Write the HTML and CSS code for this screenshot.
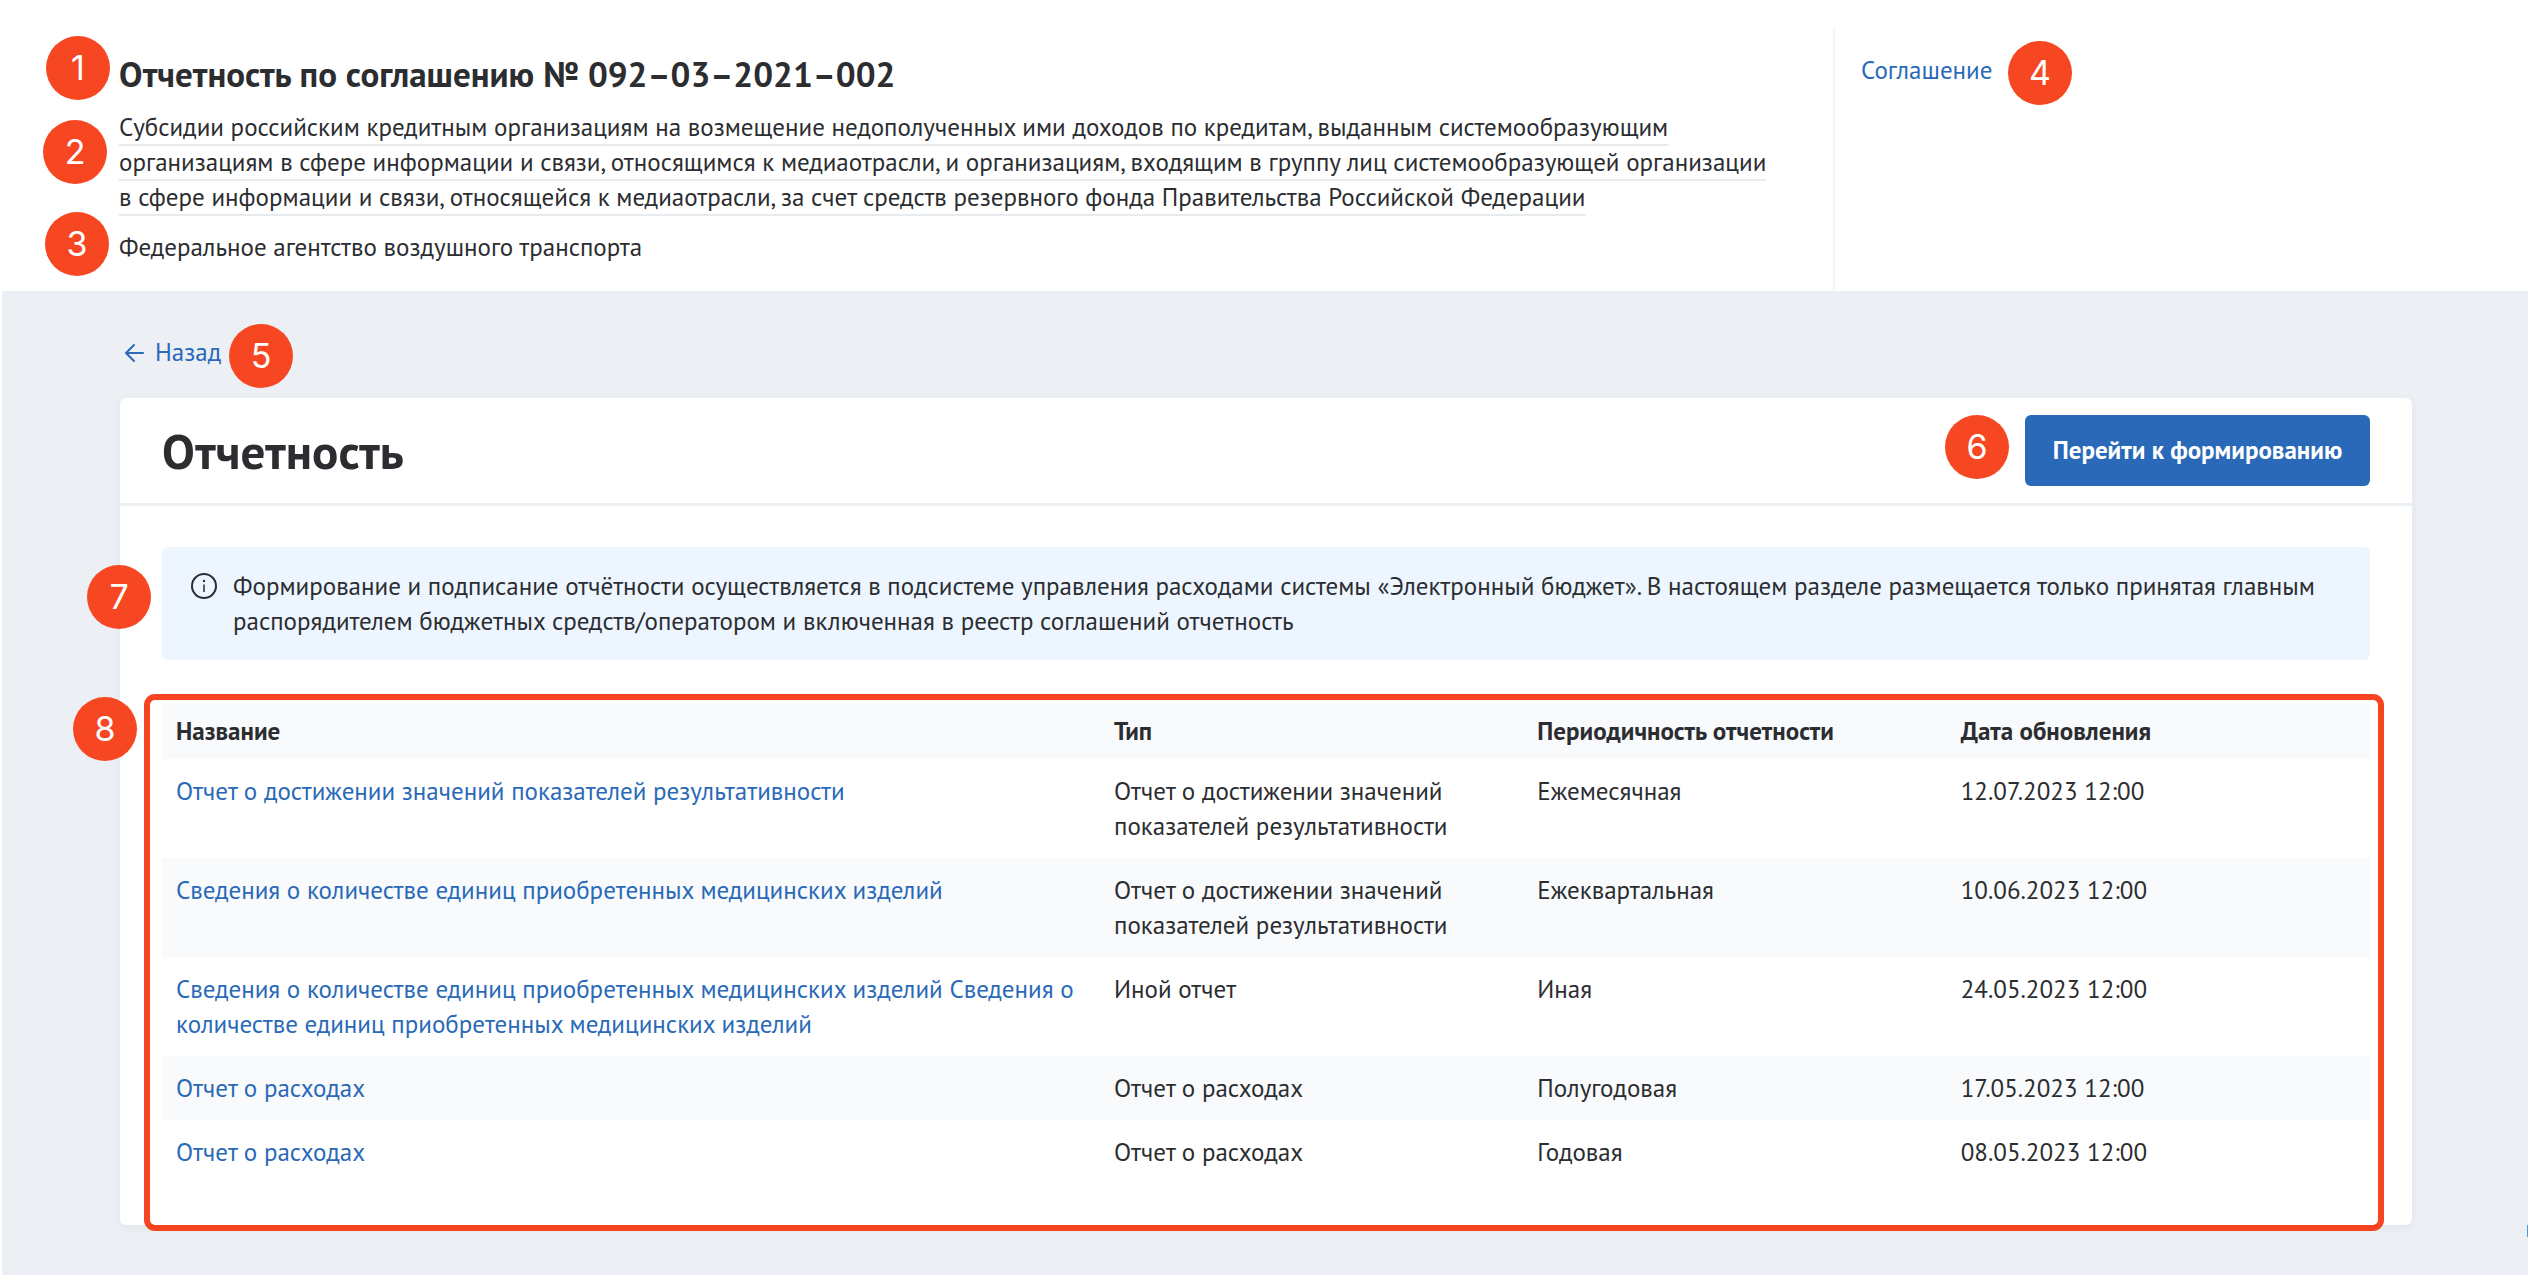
FILE: index.html
```html
<!DOCTYPE html>
<html lang="ru">
<head>
<meta charset="utf-8">
<meta name="viewport" content="width=device-width, initial-scale=1">
<title>Отчетность по соглашению</title>
<link rel="stylesheet" href="styles.css">
</head>
<body>
<header class="top">
  <div class="top-main">
    <h1 class="top-title">Отчетность по соглашению № 092–03–2021–002<span class="mark mark-1">1</span></h1>
    <p class="top-subject"><span class="subject-text">Субсидии российским кредитным организациям на возмещение недополученных ими доходов по кредитам, выданным системообразующим<br>организациям в сфере информации и связи, относящимся к медиаотрасли, и организациям, входящим в группу лиц системообразующей организации<br>в сфере информации и связи, относящейся к медиаотрасли, за счет средств резервного фонда Правительства Российской Федерации</span><span class="mark mark-2">2</span></p>
    <p class="top-agency">Федеральное агентство воздушного транспорта<span class="mark mark-3">3</span></p>
  </div>
  <nav class="top-side">
    <a class="link" href="#agreement">Соглашение</a>
    <span class="mark mark-4">4</span>
  </nav>
</header>
<main class="content">
  <div class="back-row">
    <a class="link back" href="#back">
      <svg class="back-icon" viewBox="0 0 20 20" aria-hidden="true"><path d="M19 10H2M10 2L2 10L10 18" fill="none" stroke="currentColor" stroke-width="2" stroke-linecap="round" stroke-linejoin="round"/></svg>
      Назад
    </a>
    <span class="mark mark-5">5</span>
  </div>
  <section class="card">
    <div class="card-head">
      <h2 class="card-title">Отчетность</h2>
      <div class="card-action">
        <span class="mark mark-6">6</span>
        <button class="button" type="button">Перейти к формированию</button>
      </div>
    </div>
    <div class="card-body">
      <div class="info">
        <svg class="info-icon" viewBox="0 0 28 28" aria-hidden="true"><circle cx="14" cy="14" r="12" fill="none" stroke="currentColor" stroke-width="2"/><path d="M14 12.500V20" stroke="currentColor" stroke-width="1.500"/><circle cx="14" cy="9" r="1.200" fill="currentColor"/></svg>
        <p class="info-text">Формирование и подписание отчётности осуществляется в подсистеме управления расходами системы «Электронный бюджет». В настоящем разделе размещается только принятая главным<br>распорядителем бюджетных средств/оператором и включенная в реестр соглашений отчетность</p>
        <span class="mark mark-7">7</span>
      </div>
      <div class="reports">
        <table class="table">
          <colgroup><col class="col-name"><col class="col-type"><col class="col-period"><col class="col-date"></colgroup>
          <thead>
            <tr><th>Название</th><th>Тип</th><th>Периодичность отчетности</th><th>Дата обновления</th></tr>
          </thead>
          <tbody>
            <tr><td><a class="link" href="#r1">Отчет о достижении значений показателей результативности</a></td><td>Отчет о достижении значений показателей результативности</td><td>Ежемесячная</td><td>12.07.2023 12:00</td></tr>
            <tr><td><a class="link" href="#r2">Сведения о количестве единиц приобретенных медицинских изделий</a></td><td>Отчет о достижении значений показателей результативности</td><td>Ежеквартальная</td><td>10.06.2023 12:00</td></tr>
            <tr><td><a class="link" href="#r3">Сведения о количестве единиц приобретенных медицинских изделий Сведения о количестве единиц приобретенных медицинских изделий</a></td><td>Иной отчет</td><td>Иная</td><td>24.05.2023 12:00</td></tr>
            <tr><td><a class="link" href="#r4">Отчет о расходах</a></td><td>Отчет о расходах</td><td>Полугодовая</td><td>17.05.2023 12:00</td></tr>
            <tr><td><a class="link" href="#r5">Отчет о расходах</a></td><td>Отчет о расходах</td><td>Годовая</td><td>08.05.2023 12:00</td></tr>
          </tbody>
        </table>
        <div class="frame"></div>
        <span class="mark mark-8">8</span>
      </div>
    </div>
  </section>
  <span class="edge-dot"></span>
</main>
</body>
</html>
```
FILE: styles.css
```css
* {
  box-sizing: border-box;
}

body {
  margin: 0;
  background: #fff;
  color: #2b2d30;
  font-family: "PT Sans", "Noto Sans", sans-serif;
  font-size: 25px;
  line-height: 35px;
  overflow-x: hidden;
}

h1,
h2,
p {
  margin: 0;
}

.link {
  color: #2969b8;
  text-decoration: none;
}

/* Page header */
.top {
  display: flex;
  padding: 28px 0 0 119px;
}

.top-main {
  flex: 1;
  padding: 24px 24px 26px 0;
}

.top-title {
  position: relative;
  font-size: 35px;
  line-height: 44px;
}

.top-subject {
  position: relative;
  margin-top: 14px;
}

.subject-text {
  text-decoration: underline;
  text-decoration-color: #e6ebf0;
  text-decoration-thickness: 2px;
  text-decoration-skip-ink: none;
  text-underline-offset: 8px;
}

.top-agency {
  position: relative;
  margin-top: 15px;
}

.top-side {
  position: relative;
  width: 695px;
  padding: 25px 0 0 26px;
  border-left: 2px solid #f4f5f6;
}

/* Numbered callouts */
.mark {
  position: absolute;
  display: flex;
  align-items: center;
  justify-content: center;
  width: 64px;
  height: 64px;
  border-radius: 50%;
  background: #f64722;
  color: #fff;
  font-family: Inter, sans-serif;
  font-size: 34px;
  font-weight: 400;
  line-height: 40px;
}

.mark-1 {
  left: -73px;
  top: -16px;
}

.mark-2 {
  left: -76px;
  top: 10px;
}

.mark-3 {
  left: -74px;
  top: -18px;
}

.mark-4 {
  left: 173px;
  top: 13px;
}

.mark-5 {
  left: 109px;
  top: -11px;
}

.mark-6 {
  right: 361px;
  top: 0;
}

.mark-7 {
  left: -75px;
  top: 18px;
}

.mark-8 {
  left: -89px;
  top: -7px;
}

/* Content area */
.content {
  position: relative;
  margin: 0 0 2px 2px;
  padding: 44px 116px 50px 118px;
  background: #ecf0f5;
}

.back-row {
  position: relative;
  display: flex;
}

.back {
  display: flex;
  align-items: center;
  gap: 11px;
  padding-left: 4px;
}

.back-icon {
  width: 20px;
  height: 20px;
}

.card {
  margin-top: 28px;
  border-radius: 6px;
  background: #fff;
  box-shadow: 0 2px 8px rgba(40, 60, 90, 0.06);
}

.card-head {
  display: flex;
  align-items: center;
  justify-content: space-between;
  padding: 17px 42px;
  border-bottom: 3px solid #eceff3;
}

.card-title {
  font-size: 49px;
  line-height: 60px;
}

.card-action {
  position: relative;
}

.button {
  display: block;
  width: 345px;
  height: 71px;
  padding: 0;
  border: 0;
  border-radius: 6px;
  background: #2969b8;
  color: #fff;
  font: inherit;
  font-weight: 700;
}

.card-body {
  padding: 41px 42px;
}

.info {
  position: relative;
  display: flex;
  gap: 15px;
  padding: 22px 28px 21px;
  border-radius: 6px;
  background: #edf5ff;
}

.info-icon {
  flex: none;
  width: 28px;
  height: 28px;
  margin-top: 3px;
}

.reports {
  position: relative;
  margin-top: 44px;
}

.frame {
  position: absolute;
  inset: -10px -14px -47px -18px;
  border: 6px solid #f64320;
  border-radius: 11px;
  pointer-events: none;
}

.table {
  width: 100%;
  table-layout: fixed;
  border-collapse: collapse;
}

.col-name {
  width: 938px;
}

.table th,
.table td {
  padding: 15px 14px 14px;
  text-align: left;
  vertical-align: top;
}

.table th {
  padding: 10px 14px;
  font-weight: 700;
}

.table thead tr,
.table tbody tr:nth-child(even) {
  background: #f8fafc;
}

.edge-dot {
  position: absolute;
  right: 0;
  bottom: 38px;
  width: 1px;
  height: 12px;
  background: #4d9be8;
}
```
